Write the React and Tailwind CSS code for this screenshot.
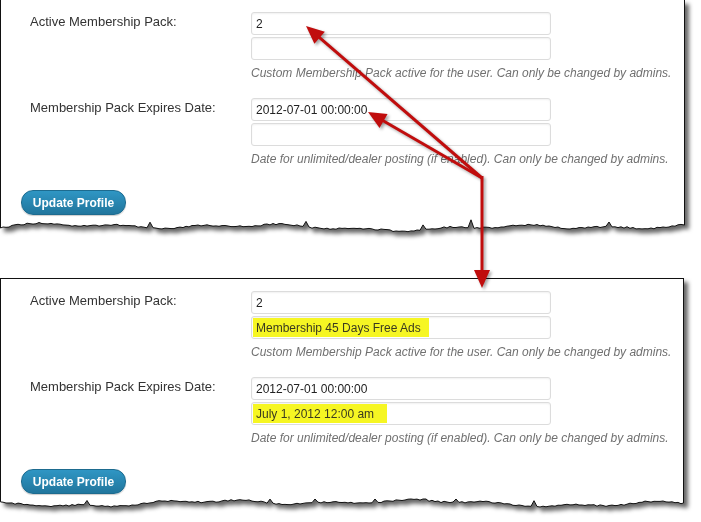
import React from "react";

function rng(seed) {
  let s = seed;
  return () => {
    s = (s * 1103515245 + 12345) % 2147483648;
    return s / 2147483648;
  };
}

function TornEdge({ width, height, base, seed, amp = 3 }) {
  const r = rng(seed);
  const p1 = r() * 6, p2 = r() * 6, p3 = r() * 6;
  const pts = [];
  for (let x = 0; x <= width; x += 3) {
    let y =
      base +
      Math.sin(x / 37 + p1) * amp * 0.6 +
      Math.sin(x / 13 + p2) * amp * 0.4 +
      Math.sin(x / 91 + p3) * amp * 0.5 +
      (r() - 0.5) * 1.6;
    if (r() < 0.03) y -= 4 + r() * 4;
    y = Math.max(1, Math.min(height - 2, y));
    pts.push([x, y]);
  }
  pts[pts.length - 1][0] = width - 0.5;
  pts[0][0] = 0.5;
  const line = pts.map((p) => `${p[0].toFixed(1)},${p[1].toFixed(1)}`).join(" ");
  const fillD =
    `M0,0 L0,${pts[0][1]} ` +
    pts.map((p) => `L${p[0].toFixed(1)},${p[1].toFixed(1)}`).join(" ") +
    ` L${width},${pts[pts.length - 1][1]} L${width},0 Z`;
  return (
    <svg width={width} height={height} className="block">
      <path d={fillD} fill="#fff" />
      <polyline points={line} fill="none" stroke="#111" strokeWidth="1" />
      <line x1="0.5" y1="0" x2="0.5" y2={pts[0][1]} stroke="#111" strokeWidth="1" />
      <line
        x1={width - 0.5}
        y1="0"
        x2={width - 0.5}
        y2={pts[pts.length - 1][1]}
        stroke="#111"
        strokeWidth="1"
      />
    </svg>
  );
}

function Input({ children, plain = true }) {
  return (
    <div className="w-[300px] h-[23px] border border-[#dcdcdc] rounded-[3px] bg-white shadow-[inset_0_1px_2px_rgba(0,0,0,0.06)] flex items-stretch p-px">
      {plain ? (
        <span className="pl-[3px] leading-[21px] text-[12px] text-[#222]">{children}</span>
      ) : (
        children
      )}
    </div>
  );
}

function Highlight({ children, pr }) {
  return (
    <span className={`bg-[#f6f623] pl-[3px] ${pr} leading-[21px] text-[12px] text-[#3a3a20]`}>
      {children}
    </span>
  );
}

function Row({ label, first, second, desc, top }) {
  return (
    <div className={`flex ${top}`}>
      <div className="w-[250px] pl-[29px] text-[13px] text-[#333] leading-[20px]">
        {label}
      </div>
      <div className="flex flex-col gap-[2px]">
        {first}
        {second}
        <div className="mt-[3px] text-[12px] italic text-[#707070] leading-[16px] whitespace-nowrap">
          {desc}
        </div>
      </div>
    </div>
  );
}

function Button() {
  return (
    <div className="ml-[20px] mt-[23px] w-[105px] h-[25px] rounded-[12px] border border-[#1d6b8f] bg-gradient-to-b from-[#2f96c4] to-[#21769d] flex items-center justify-center text-white text-[12px] font-bold shadow-[0_1px_1px_rgba(0,0,0,0.2)]">
      Update Profile
    </div>
  );
}

function Panel({ topBorder, height, width, seed, base, highlighted }) {
  return (
    <div className="drop-shadow-[4px_4px_2px_rgba(0,0,0,0.6)]">
      <div
        className={`bg-white border-l border-r border-[#111] ${topBorder ? "border-t" : ""}`}
        style={{ width, height }}
      >
        <Row
          top="pt-[12px]"
          label="Active Membership Pack:"
          first={<Input>2</Input>}
          second={
            highlighted ? (
              <Input plain={false}>
                <Highlight pr="pr-[8px]">Membership 45 Days Free Ads</Highlight>
              </Input>
            ) : (
              <Input>{""}</Input>
            )
          }
          desc="Custom Membership Pack active for the user. Can only be changed by admins."
        />
        <Row
          top="mt-[17px]"
          label="Membership Pack Expires Date:"
          first={<Input>2012-07-01 00:00:00</Input>}
          second={
            highlighted ? (
              <Input plain={false}>
                <Highlight pr="pr-[13px]">July 1, 2012 12:00 am</Highlight>
              </Input>
            ) : (
              <Input>{""}</Input>
            )
          }
          desc="Date for unlimited/dealer posting (if enabled). Can only be changed by admins."
        />
        <Button />
      </div>
      <TornEdge width={width} height={18} base={base} seed={seed} />
    </div>
  );
}

function Arrow({ x1, y1, x2, y2 }) {
  const dx = x2 - x1, dy = y2 - y1;
  const len = Math.hypot(dx, dy);
  const ux = dx / len, uy = dy / len;
  const hl = 18, hw = 8;
  const bx = x2 - ux * hl, by = y2 - uy * hl;
  const px = -uy, py = ux;
  const head = `${x2},${y2} ${bx + px * hw},${by + py * hw} ${bx - px * hw},${by - py * hw}`;
  return (
    <g>
      <line x1={x1} y1={y1} x2={bx + ux * 2} y2={by + uy * 2} stroke="#c00d0d" strokeWidth="3" />
      <polygon points={head} fill="#c00d0d" />
    </g>
  );
}

export default function App() {
  return (
    <div className="relative w-[701px] h-[522px] bg-white overflow-hidden font-['Liberation_Sans',Arial,sans-serif]">
      <Panel width={685} height={218} seed={7} base={9} highlighted={false} />
      <div className="mt-[42px]">
        <Panel topBorder width={684} height={220} seed={31} base={5} highlighted />
      </div>
      <svg
        className="absolute left-0 top-0 pointer-events-none drop-shadow-[2px_2px_1.5px_rgba(0,0,0,0.35)]"
        width="701"
        height="522"
      >
        <Arrow x1={482} y1={178} x2={306} y2={26} />
        <Arrow x1={482} y1={178} x2={368} y2={112} />
        <Arrow x1={482} y1={176} x2={482} y2={288} />
      </svg>
    </div>
  );
}
